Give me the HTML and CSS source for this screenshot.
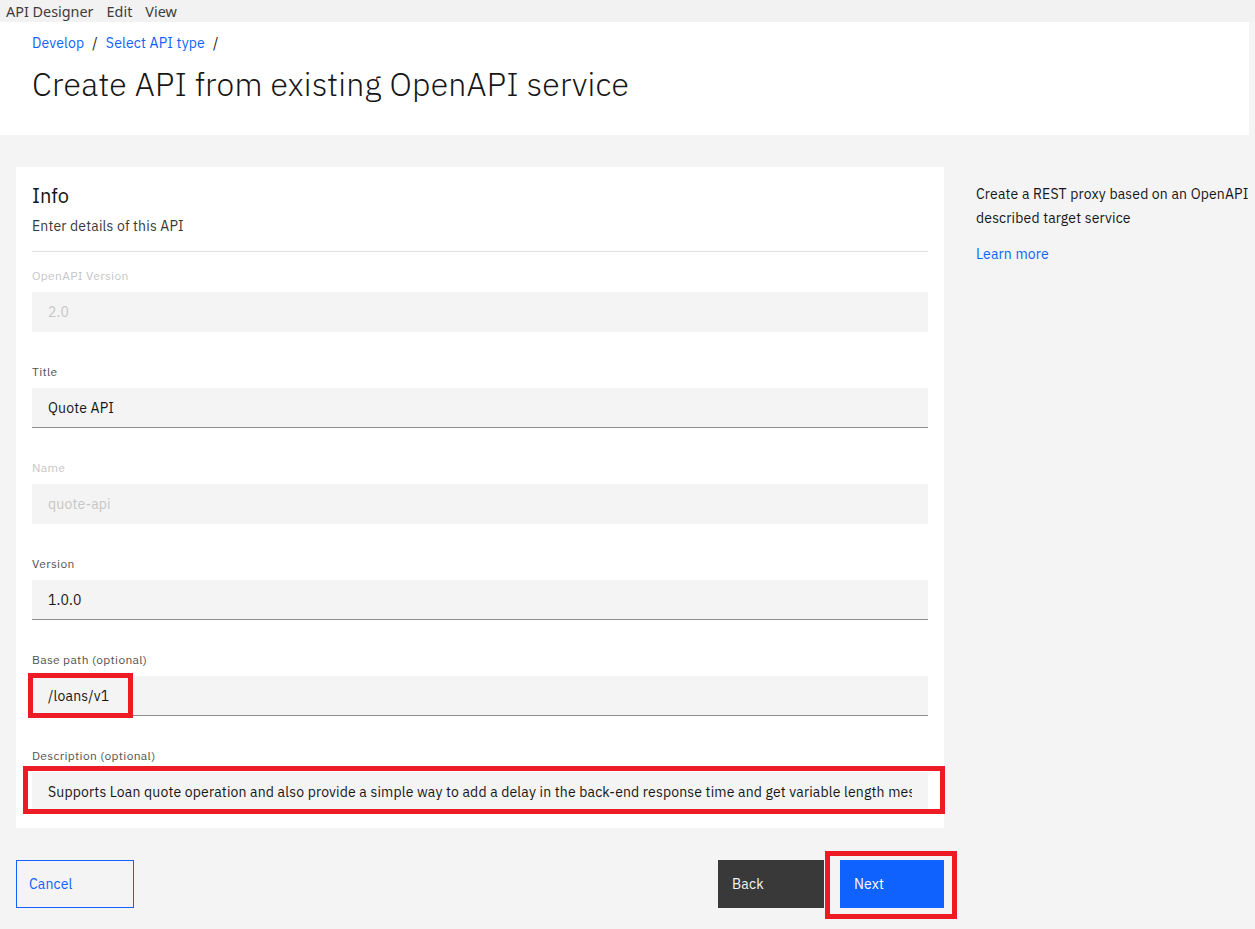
FILE: index.html
```html
<!DOCTYPE html>
<html lang="en">
<head>
<meta charset="utf-8">
<title>Create API from existing OpenAPI service</title>
<link rel="stylesheet" href="styles.css">
</head>
<body>
<div class="menubar">
  <span class="menu-item">API Designer</span>
  <span class="menu-item">Edit</span>
  <span class="menu-item">View</span>
</div>
<header class="page-header">
  <nav class="breadcrumb">
    <a class="crumb">Develop</a><span class="sep">/</span>
    <a class="crumb">Select API type</a><span class="sep">/</span>
  </nav>
  <h1 class="page-title">Create API from existing OpenAPI service</h1>
</header>
<main class="content">
  <div class="main-col">
    <section class="card">
      <h2 class="card-title">Info</h2>
      <p class="card-sub">Enter details of this API</p>
      <hr class="divider">
      <div class="field">
        <label class="label disabled">OpenAPI Version</label>
        <div class="input disabled">2.0</div>
      </div>
      <div class="field">
        <label class="label">Title</label>
        <div class="input">Quote API</div>
      </div>
      <div class="field">
        <label class="label disabled">Name</label>
        <div class="input disabled">quote-api</div>
      </div>
      <div class="field">
        <label class="label">Version</label>
        <div class="input">1.0.0</div>
      </div>
      <div class="field">
        <label class="label">Base path (optional)</label>
        <div class="input-wrap">
          <div class="input">/loans/v1</div>
          <span class="mark mark-base"></span>
        </div>
      </div>
      <div class="field last">
        <label class="label">Description (optional)</label>
        <div class="input-wrap">
          <div class="input textarea"><span class="clip">Supports Loan quote operation and also provide a simple way to add a delay in the back-end response time and get variable length message</span></div>
          <span class="mark mark-desc"></span>
        </div>
      </div>
    </section>
    <div class="actions">
      <button class="btn btn-ghost">Cancel</button>
      <div class="actions-right">
        <button class="btn btn-secondary">Back</button>
        <div class="btn-wrap">
          <button class="btn btn-primary">Next</button>
          <span class="mark mark-next"></span>
        </div>
      </div>
    </div>
  </div>
  <aside class="side">
    <p class="side-text">Create a REST proxy based on an OpenAPI described target service</p>
    <a class="side-link">Learn more</a>
  </aside>
</main>
</body>
</html>
```
FILE: styles.css
```css
* { box-sizing: border-box; }
html, body { margin: 0; padding: 0; }
body {
  background: #f4f4f4;
  font-family: "IBM Plex Sans", Roboto, "Noto Sans", sans-serif;
  color: #161616;
  width: 1255px;
  min-height: 929px;
}
.menubar {
  height: 22px;
  background: #f2f2f2;
  display: flex;
  align-items: center;
  padding-left: 6px;
  gap: 13px;
  font-family: "Noto Sans", "DejaVu Sans", sans-serif;
  font-size: 14.4px;
  color: #3c3c3c;
}
.page-header {
  background: #ffffff;
  height: 113px;
  padding: 11px 32px 0;
  margin-right: 6px;
}
.breadcrumb {
  font-size: 14px;
  line-height: 20px;
  letter-spacing: 0.16px;
  display: flex;
  align-items: center;
}
.crumb { color: #0f62fe; text-decoration: none; }
.sep { color: #161616; margin: 0 8px; }
.page-title {
  margin: 11px 0 0;
  font-size: 32px;
  font-weight: 300;
  line-height: 40px;
  letter-spacing: 0.25px;
  color: #161616;
}
.content {
  display: flex;
  padding: 32px 0 0 16px;
}
.main-col { width: 928px; flex: none; }
.card {
  background: #ffffff;
  padding: 16px 16px 16px;
}
.card-title {
  margin: 0;
  font-size: 20px;
  font-weight: 400;
  line-height: 26px;
}
.card-sub {
  margin: 8px 0 0;
  font-size: 14px;
  line-height: 18px;
  letter-spacing: 0.16px;
  color: #393939;
}
.divider {
  border: 0;
  border-top: 1px solid #e0e0e0;
  margin: 16px 0 16px;
}
.field { margin-bottom: 32px; }
.field.last { margin-bottom: 0; }
.label {
  display: block;
  font-size: 12px;
  line-height: 16px;
  letter-spacing: 0.32px;
  color: #525252;
  margin-bottom: 8px;
}
.label.disabled { color: #c6c6c6; }
.input {
  height: 40px;
  background: #f4f4f4;
  border-bottom: 1px solid #8d8d8d;
  padding: 0 16px;
  font-size: 14px;
  line-height: 40px;
  letter-spacing: 0.16px;
  color: #161616;
  white-space: nowrap;
  overflow: hidden;
}
.input.disabled { color: #c6c6c6; border-bottom-color: transparent; }
.input.textarea { border-bottom-color: transparent; }
.clip { display: block; overflow: hidden; white-space: nowrap; }
.input-wrap, .btn-wrap { position: relative; }
.mark {
  position: absolute;
  border: 5px solid #ed1c24;
  pointer-events: none;
}
.mark-base { left: -4px; top: -3px; width: 105px; height: 45px; }
.mark-desc { left: -9px; top: -6px; width: 922px; height: 48px; }
.mark-next { left: -15px; top: -9px; width: 132px; height: 68px; }
.actions {
  display: flex;
  justify-content: space-between;
  margin-top: 32px;
}
.actions-right { display: flex; gap: 16px; }
.btn {
  height: 48px;
  font-family: inherit;
  font-size: 14px;
  letter-spacing: 0.16px;
  text-align: left;
  padding: 0 14px;
  border: 0;
  cursor: pointer;
}
.btn-ghost {
  width: 118px;
  background: transparent;
  border: 1px solid #0f62fe;
  color: #0f62fe;
  padding-left: 12px;
}
.btn-secondary { width: 106px; background: #393939; color: #f4f4f4; }
.btn-primary { width: 104px; background: #0f62fe; color: #ffffff; display: block; }
.side {
  flex: 1;
  padding: 15px 0 0 32px;
  font-size: 14px;
  letter-spacing: 0.16px;
}
.side-text { margin: 0; line-height: 24px; color: #161616; }
.side-link { display: block; margin-top: 12px; color: #0f62fe; line-height: 24px; }
```
